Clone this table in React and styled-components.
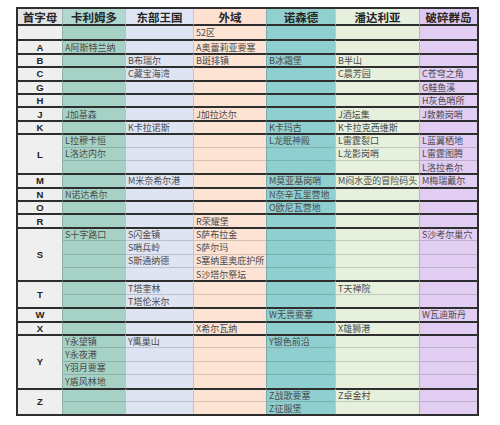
import React from 'react';
import styled, { createGlobalStyle } from 'styled-components';

const GlobalStyle = createGlobalStyle`
    body {
        margin: 0;
        background: #ffffff;
        font-family: "Noto Sans CJK SC", "Liberation Sans", sans-serif;
    }
`

const zones = [
    { name: '卡利姆多', head: '#b1d8ce', body: '#a6d2c6' },
    { name: '东部王国', head: '#dfe5f5', body: '#dfe4f3' },
    { name: '外域', head: '#fde0d0', body: '#fde3d4' },
    { name: '诺森德', head: '#92d0cf', body: '#90cfcf' },
    { name: '潘达利亚', head: '#e7f0de', body: '#e6f0dc' },
    { name: '破碎群岛', head: '#dcc8f0', body: '#e2cdf3' },
]

const groups = [
    { letter: '', rows: [['', '', '52区', '', '', '']] },
    { letter: 'A', rows: [['A阿斯特兰纳', '', 'A奥蕾莉亚要塞', '', '', '']] },
    { letter: 'B', rows: [['', 'B布瑞尔', 'B斑排镇', 'B冰霜堡', 'B半山', '']] },
    { letter: 'C', rows: [['', 'C藏宝海湾', '', '', 'C晨芳园', 'C苍穹之角']] },
    { letter: 'G', rows: [['', '', '', '', '', 'G鲑鱼溪']] },
    { letter: 'H', rows: [['', '', '', '', '', 'H灰色哨所']] },
    { letter: 'J', rows: [['J加基森', '', 'J加拉达尔', '', 'J酒坛集', 'J敦赖岗哨']] },
    { letter: 'K', rows: [['', 'K卡拉诺斯', '', 'K卡玛古', 'K卡拉克西维斯', '']] },
    {
        letter: 'L', rows: [
            ['L拉穆卡恒', '', '', 'L龙眠神殿', 'L雷霆裂口', 'L蓝翼栖地'],
            ['L洛达内尔', '', '', '', 'L龙影岗哨', 'L雷霆图腾'],
            ['', '', '', '', '', 'L洛拉希尔'],
        ]
    },
    { letter: 'M', rows: [['', 'M米奈希尔港', '', 'M莫亚基岗哨', 'M闷水壶的冒险码头', 'M梅瑞戴尔']] },
    { letter: 'N', rows: [['N诺达希尔', '', '', 'N奈辛瓦里营地', '', '']] },
    { letter: 'O', rows: [['', '', '', 'O欧尼瓦营地', '', '']] },
    { letter: 'R', rows: [['', '', 'R荣耀堡', '', '', '']] },
    {
        letter: 'S', rows: [
            ['S十字路口', 'S闪金镇', 'S萨布拉金', '', '', 'S沙考尔巢穴'],
            ['', 'S哨兵岭', 'S萨尔玛', '', '', ''],
            ['', 'S斯通纳德', 'S塞纳里奥庇护所', '', '', ''],
            ['', '', 'S沙塔尔祭坛', '', '', ''],
        ]
    },
    {
        letter: 'T', rows: [
            ['', 'T塔奎林', '', '', 'T天禅院', ''],
            ['', 'T塔伦米尔', '', '', '', ''],
        ]
    },
    { letter: 'W', rows: [['', '', '', 'W无畏要塞', '', 'W瓦迪斯丹']] },
    { letter: 'X', rows: [['', '', 'X希尔瓦纳', '', 'X雄狮港', '']] },
    {
        letter: 'Y', rows: [
            ['Y永望镇', 'Y鹰巢山', '', 'Y银色前沿', '', ''],
            ['Y永夜港', '', '', '', '', ''],
            ['Y羽月要塞', '', '', '', '', ''],
            ['Y盾风林地', '', '', '', '', ''],
        ]
    },
    {
        letter: 'Z', rows: [
            ['', '', '', 'Z战歌要塞', 'Z卓金村', ''],
            ['', '', '', 'Z征服堡', '', ''],
        ]
    },
]

function App() {
    return (
        <Page>
            <GlobalStyle />
            <Grid>
                <HeadCell bg="#e4e4e4" first>首字母</HeadCell>
                {zones.map(z => <HeadCell key={z.name} bg={z.head}>{z.name}</HeadCell>)}
                {groups.map((g, gi) => (
                    <React.Fragment key={gi}>
                        <LetterCell span={g.rows.length} start={gi > 0}>{g.letter}</LetterCell>
                        {g.rows.map((row, ri) =>
                            row.map((text, ci) => (
                                <Cell
                                    key={ri + '-' + ci}
                                    bg={zones[ci].body}
                                    start={ri === 0 && gi > 0}
                                    inner={ri > 0}
                                >
                                    {text}
                                </Cell>
                            ))
                        )}
                    </React.Fragment>
                ))}
            </Grid>
        </Page>
    )
}

const Page = styled.div`
    padding: 7px 0 0 16px;
`

const Grid = styled.div`
    box-sizing: border-box;
    display: grid;
    width: 463px;
    grid-template-columns: 44px 63px 68px 73px 69px 84px 58px;
    grid-template-rows: 17px repeat(29, 13.4px);
    border: 2px solid #2e2e2e;
`

const HeadCell = styled.div`
    box-sizing: border-box;
    display: flex;
    align-items: center;
    justify-content: center;
    background-color: ${props => props.bg};
    color: #262626;
    font-size: 11.5px;
    font-weight: 700;
    border-left: ${props => props.first ? 'none' : '1px solid rgba(0, 0, 0, 0.14)'};
    border-bottom: 2px solid #2e2e2e;
`

const LetterCell = styled.div`
    box-sizing: border-box;
    grid-row: span ${props => props.span};
    display: flex;
    align-items: center;
    justify-content: center;
    background-color: #efefef;
    color: #222;
    font-family: "Liberation Sans", "Noto Sans CJK SC", sans-serif;
    font-size: 9.5px;
    font-weight: 700;
    border-top: ${props => props.start ? '2px solid #2e2e2e' : 'none'};
`

const Cell = styled.div`
    box-sizing: border-box;
    display: flex;
    align-items: center;
    padding-left: 2px;
    min-width: 0;
    background-color: ${props => props.bg};
    color: #4a4a4a;
    font-size: 9px;
    line-height: 11px;
    white-space: nowrap;
    overflow: visible;
    position: relative;
    border-left: 1px solid rgba(0, 0, 0, 0.16);
    border-top: ${props => props.start ? '2px solid #2e2e2e' : props.inner ? '1px solid rgba(60, 70, 80, 0.22)' : 'none'};
`

export default App
